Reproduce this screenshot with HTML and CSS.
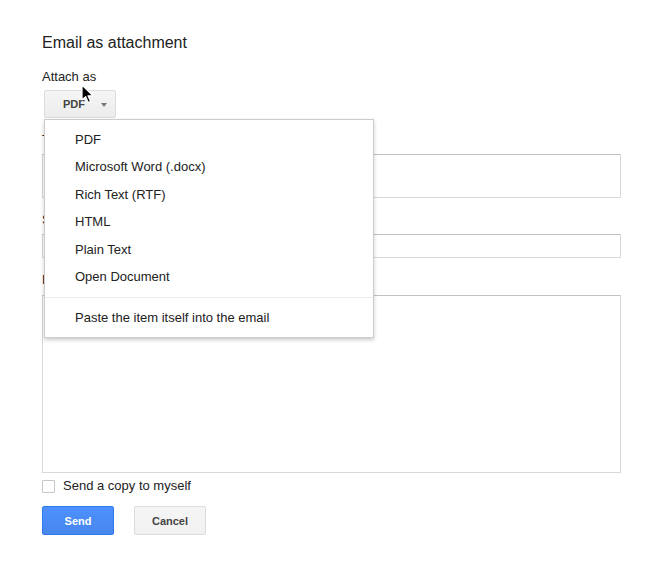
FILE: index.html
```html
<!DOCTYPE html>
<html>
<head>
<meta charset="utf-8">
<link rel="stylesheet" href="styles.css">
</head>
<body>
<div class="dialog">
  <div class="title">Email as attachment</div>
  <div class="label attach-label">Attach as</div>
  <div class="select-wrap">
    <div class="select-btn"><span class="select-text">PDF</span><span class="caret"></span></div>
    <div class="menu">
      <div class="menu-item">PDF</div>
      <div class="menu-item">Microsoft Word (.docx)</div>
      <div class="menu-item">Rich Text (RTF)</div>
      <div class="menu-item">HTML</div>
      <div class="menu-item">Plain Text</div>
      <div class="menu-item">Open Document</div>
      <div class="menu-sep"></div>
      <div class="menu-item">Paste the item itself into the email</div>
    </div>
    <svg class="cursor" width="13" height="20" viewBox="0 0 13 20">
      <path d="M1 1 L1 16 L4.6 12.6 L7.2 18.6 L9.6 17.6 L7 11.8 L12 11.8 Z" fill="#000" stroke="#fff" stroke-width="1.2" stroke-linejoin="round"/>
    </svg>
  </div>
  <div class="label to-label">To</div>
  <div class="box to-box"></div>
  <div class="label field-label">Subject</div>
  <div class="box subject-box"></div>
  <div class="label field-label">Message</div>
  <div class="box message-box"></div>
  <div class="check-row">
    <span class="checkbox"></span>
    <span class="check-text">Send a copy to myself</span>
  </div>
  <div class="buttons">
    <div class="btn btn-send">Send</div>
    <div class="btn btn-cancel">Cancel</div>
  </div>
</div>
</body>
</html>
```
FILE: styles.css
```css
html, body {
  margin: 0;
  padding: 0;
  background: #fff;
}
body {
  font-family: "Liberation Sans", Arial, sans-serif;
  color: #222;
  font-size: 13px;
}
.dialog {
  padding: 33px 0 0 42px;
  width: 579px;
  display: flex;
  flex-direction: column;
}
.title {
  font-size: 16px;
  line-height: 20px;
  color: #222;
}
.label {
  font-size: 13px;
  line-height: 16px;
}
.attach-label {
  margin-top: 16px;
}
.select-wrap {
  position: relative;
  margin-top: 5px;
  margin-left: 2px;
  height: 28px;
  display: flex;
}
.select-btn {
  box-sizing: border-box;
  width: 72px;
  height: 28px;
  border: 1px solid #dcdcdc;
  border-radius: 2px;
  background: linear-gradient(#f5f5f5, #ececec);
  display: flex;
  align-items: center;
  padding-left: 18px;
}
.select-text {
  font-size: 11px;
  font-weight: bold;
  color: #444;
  line-height: 14px;
}
.caret {
  margin-left: 16px;
  width: 0;
  height: 0;
  border-left: 3.5px solid transparent;
  border-right: 3.5px solid transparent;
  border-top: 4px solid #777;
  margin-top: 1px;
}
.menu {
  position: absolute;
  left: 0;
  top: 29px;
  width: 330px;
  box-sizing: border-box;
  background: #fff;
  border: 1px solid #ccc;
  border-color: rgba(0,0,0,0.2);
  box-shadow: 0 2px 4px rgba(0,0,0,0.2);
  padding: 5.5px 0;
  z-index: 10;
}
.menu-item {
  font-size: 13px;
  line-height: 17.5px;
  padding: 5px 0 5px 30px;
  color: #222;
  white-space: nowrap;
}
.menu-sep {
  height: 1px;
  background: #ebebeb;
  margin: 6.5px 0 6px;
}
.cursor {
  position: absolute;
  left: 37px;
  top: -6px;
  z-index: 20;
}
.to-label {
  margin-top: 14px;
}
.field-label {
  margin-top: 14px;
}
.box {
  box-sizing: border-box;
  width: 579px;
  border: 1px solid #d9d9d9;
  border-top-color: #c0c0c0;
  background: #fff;
  margin-top: 6px;
}
.to-box {
  height: 44px;
}
.subject-box {
  height: 24px;
}
.message-box {
  height: 178px;
  margin-top: 7px;
}
.check-row {
  display: flex;
  align-items: center;
  margin-top: 6px;
  height: 14px;
}
.checkbox {
  box-sizing: border-box;
  width: 13px;
  height: 13px;
  border: 1px solid #c6c6c6;
  border-radius: 1px;
  background: #fff;
}
.check-text {
  margin-left: 8px;
  font-size: 13px;
  line-height: 16px;
  color: #222;
}
.buttons {
  display: flex;
  gap: 20px;
  margin-top: 13px;
}
.btn {
  box-sizing: border-box;
  width: 72px;
  height: 29px;
  border-radius: 2px;
  font-size: 11px;
  font-weight: bold;
  display: flex;
  align-items: center;
  justify-content: center;
}
.btn-send {
  background: linear-gradient(#4d90fe, #4787ed);
  border: 1px solid #3079ed;
  color: #fff;
}
.btn-cancel {
  background: linear-gradient(#f5f5f5, #f1f1f1);
  border: 1px solid #dcdcdc;
  color: #444;
}
```
